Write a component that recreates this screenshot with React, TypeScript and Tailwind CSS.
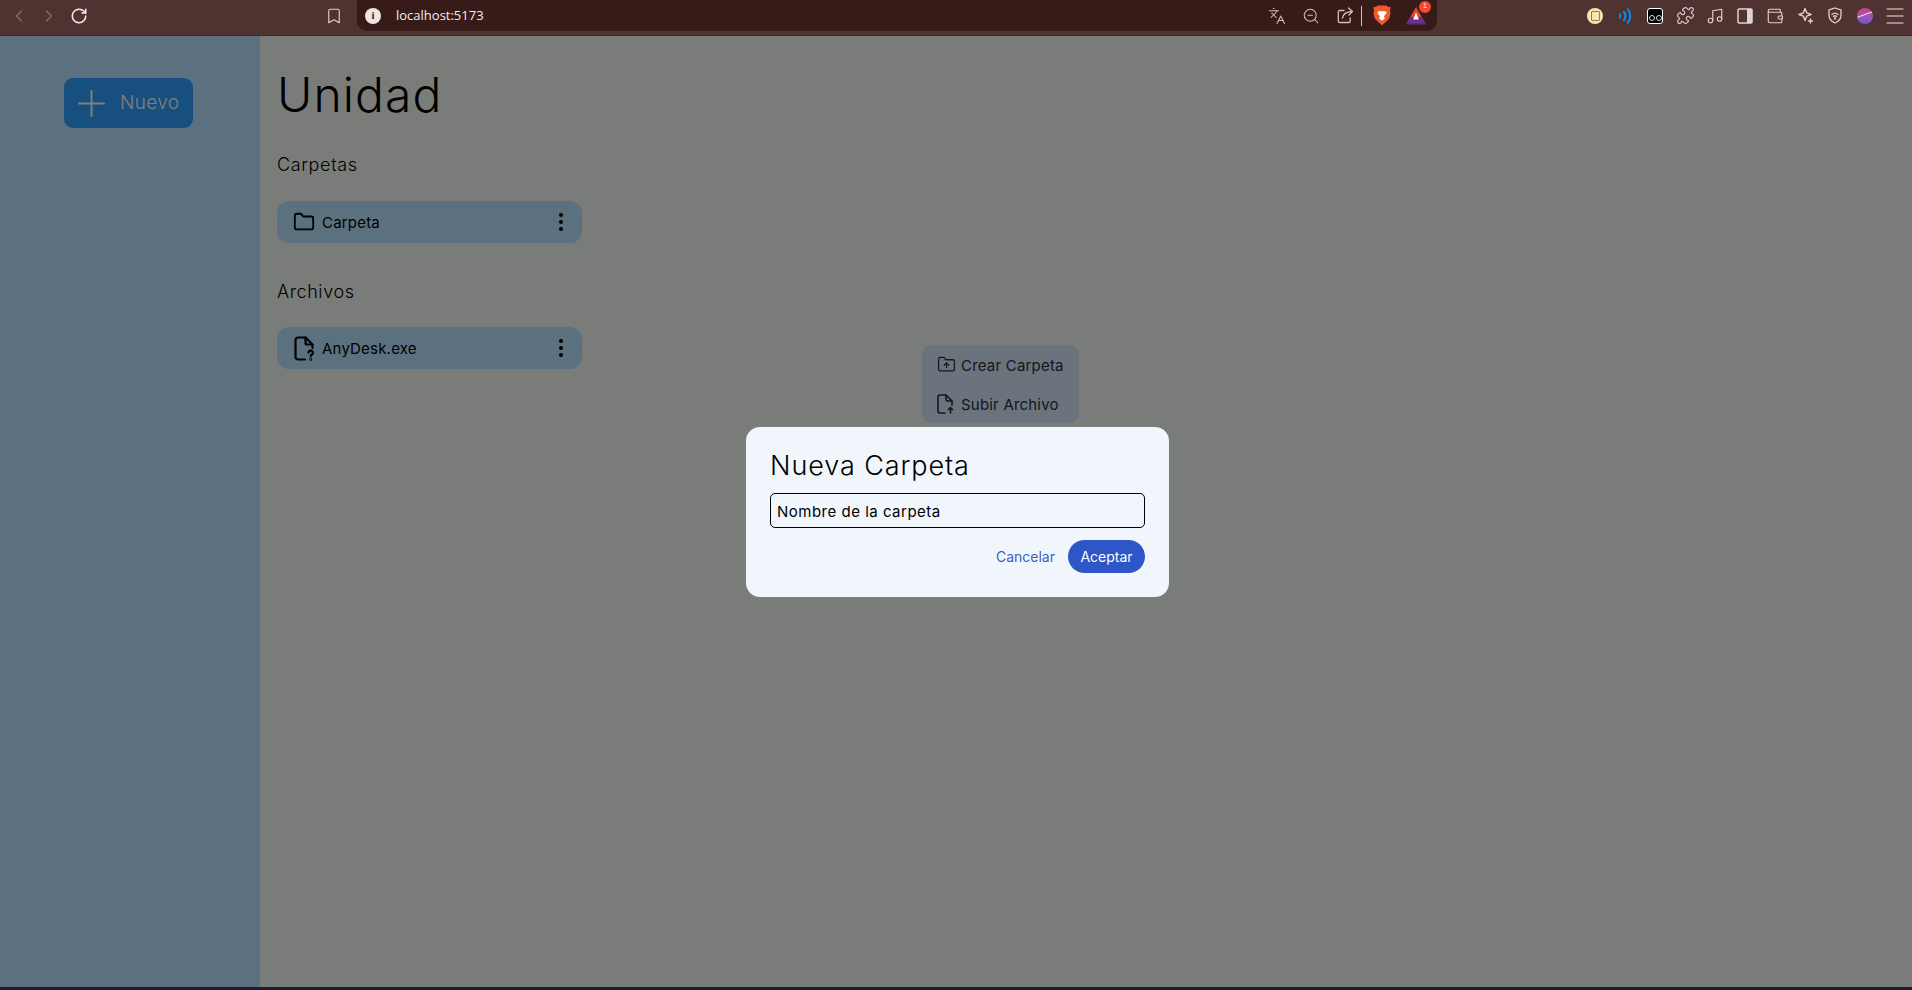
import { useState } from 'react';
import {
  ChevronLeft,
  ChevronRight,
  RotateCw,
  Bookmark,
  Languages,
  ZoomOut,
  Puzzle,
  Music,
  Wallet,
  Plus,
  Folder,
  FolderUp,
  Menu,
} from 'lucide-react';

function BraveLogo() {
  return (
    <svg width="18" height="21" viewBox="0 0 18 21">
      <path d="M4.5 0.5h9l1.5 1.6 2 -.3 .7 1.2 -.8 2.2 .6 3 -1.2 5.2 -3.5 3.6 -3.8 3.2 -3.8 -3.2 -3.500 -3.6 -1.2 -5.2 .6 -3 -.8 -2.2 .7 -1.2 2 .3z" fill="#f0592b" />
      <path d="M5 6.5l2.6 -.6 1.4 .6 1.4 -.6 2.6 .6 .6 1.4 -2.6 3.4 .8 2.2 -2.8 2.2 -2.8 -2.2 .8 -2.2 -2.6 -3.4z" fill="#fff" />
    </svg>
  );
}

function RewardsLogo() {
  return (
    <svg width="20" height="18" viewBox="0 0 20 18">
      <path d="M10 0l9.500 16.500H.5z" fill="#e2482d" />
      <path d="M.5 16.500L5 9l5 4 5-4 4.500 7.500z" fill="#6b2f8f" />
      <path d="M10 5.500l2.800 7H7.200z" fill="#fff" />
      <rect x="0.5" y="16" width="19" height="1.6" fill="#5a2a86" />
    </svg>
  );
}

function ShareIcon() {
  return (
    <svg width="17" height="17" viewBox="0 0 17 17" fill="none" stroke="#cdbfbb" strokeWidth="1.3" strokeLinecap="round" strokeLinejoin="round">
      <path d="M7 3.500H2.500a1.200 1.200 0 0 0-1.200 1.200v9.600a1.200 1.200 0 0 0 1.200 1.200h9.500a1.200 1.200 0 0 0 1.200-1.200V11" />
      <path d="M5.500 11c.5-4 3-6 9.500-6.500" />
      <path d="M11.500 1l4 3.500-3.500 3.500" />
    </svg>
  );
}

function SidebarToggle() {
  return (
    <svg width="16" height="16" viewBox="0 0 16 16">
      <rect x="1" y="1" width="14" height="14" rx="1" fill="none" stroke="#ddd3d0" strokeWidth="1.5" />
      <rect x="10" y="1" width="5" height="14" fill="#ddd3d0" />
    </svg>
  );
}

function ExtensionIcons() {
  return (
    <div className="flex items-center pr-[2px]">
      <div className="w-[30px] flex justify-center">
        <div className="w-4 h-4 rounded-full bg-[#f4e7ae] flex items-center justify-center">
          <div className="w-[9px] h-[10px] border border-[#8b7f55] rounded-[1px]" />
        </div>
      </div>
      <div className="w-[30px] flex justify-center">
        <svg width="14" height="16" viewBox="0 0 14 16" fill="none" stroke="#0a8af0" strokeLinecap="round" strokeWidth="2.200">
          <path d="M2 6.500a3 3 0 0 1 0 3" />
          <path d="M6 4a7 7 0 0 1 0 8" />
          <path d="M10 1.500a11 11 0 0 1 0 13" />
        </svg>
      </div>
      <div className="w-[30px] flex justify-center">
        <div className="w-4 h-4 rounded-[3px] bg-black border border-white flex items-end justify-center gap-px pb-[2px]">
          <div className="w-[6px] h-[6px] rounded-full border border-[#ddd]" />
          <div className="w-[6px] h-[6px] rounded-full border border-[#ddd]" />
        </div>
      </div>
      <div className="w-[30px] flex justify-center">
        <Puzzle size={19} color="#ddd3d0" strokeWidth={1.4} />
      </div>
      <div className="w-[30px] flex justify-center">
        <Music size={18} color="#ddd3d0" strokeWidth={1.5} />
      </div>
      <div className="w-[30px] flex justify-center">
        <SidebarToggle />
      </div>
      <div className="w-[30px] flex justify-center">
        <Wallet size={18} color="#ddd3d0" strokeWidth={1.5} />
      </div>
      <div className="w-[30px] flex justify-center">
        <svg width="17" height="17" viewBox="0 0 17 17" fill="none" stroke="#ddd3d0" strokeWidth="1.4" strokeLinejoin="round">
          <path d="M8 1.500l1.700 4.300 4.300 1.700 -4.300 1.700 -1.700 4.300 -1.700 -4.300 -4.300 -1.700 4.300 -1.700z" />
          <path d="M13.500 12v4M11.500 14h4" strokeLinecap="round" />
        </svg>
      </div>
      <div className="w-[30px] flex justify-center">
        <svg width="16" height="17" viewBox="0 0 16 17" fill="none" stroke="#ddd3d0" strokeWidth="1.300" strokeLinecap="round">
          <path d="M8 1l6 2v5c0 4-2.600 6.600-6 8-3.400-1.400-6-4-6-8V3z" />
          <path d="M5 7.500a4.400 4.400 0 0 1 6 0M6.500 9.500a2.200 2.200 0 0 1 3 0" />
          <circle cx="8" cy="11.500" r=".5" />
        </svg>
      </div>
      <div className="w-[30px] flex justify-center">
        <div className="w-4 h-4 rounded-full bg-gradient-to-b from-[#d63a86] to-[#6f55d8] relative overflow-hidden">
          <div className="absolute left-0 top-[6px] w-4 h-px bg-white/80 -rotate-[20deg]" />
        </div>
      </div>
      <div className="w-[30px] flex justify-center">
        <Menu size={24} color="#eee6e3" strokeWidth={1.1} />
      </div>
    </div>
  );
}

function BrowserBar() {
  return (
    <div className="h-[36px] shrink-0 bg-[#4f3331] border-b border-[#3e2927] flex items-start">
      <div className="flex items-center h-[31px] pl-[9px]">
        <div className="w-5 flex justify-center">
          <ChevronLeft size={22} color="#86716e" strokeWidth={1.4} />
        </div>
        <div className="w-5 ml-[10px] flex justify-center">
          <ChevronRight size={22} color="#86716e" strokeWidth={1.4} />
        </div>
        <div className="w-5 ml-[10px] flex justify-center">
          <RotateCw size={18} color="#f3eeee" strokeWidth={2} />
        </div>
        <div className="w-5 ml-[235px] flex justify-center">
          <Bookmark size={18} color="#ddd3d0" strokeWidth={1.5} />
        </div>
      </div>
      <div className="ml-[13px] w-[1080px] h-[31px] bg-[#371b19] rounded-b-[10px] flex items-center pl-[9px] pr-[11px]">
        <div className="w-4 h-4 ml-[-1px] rounded-full bg-[#f2e4e2] flex items-center justify-center font-['Liberation_Serif',serif] font-bold text-[11px] text-[#371b19]">
          i
        </div>
        <span className="ml-[15px] text-[13px] text-[#f4ecea] font-['Open_Sans',sans-serif]">localhost:5173</span>
        <div className="ml-auto flex items-center">
          <Languages size={18} color="#cdbfbb" strokeWidth={1.4} />
          <ZoomOut size={18} color="#cdbfbb" strokeWidth={1.4} className="ml-[16px]" />
          <div className="ml-[17px]">
            <ShareIcon />
          </div>
          <div className="w-px h-[20px] bg-[#cdbfbb] ml-[7px]" />
          <div className="ml-[11px]">
            <BraveLogo />
          </div>
          <div className="ml-[15px] relative">
            <RewardsLogo />
            <div className="absolute -top-[6px] -right-[5px] w-[12px] h-[12px] rounded-full bg-[#f2492f] text-white text-[7px] flex items-center justify-center font-['Liberation_Sans',sans-serif]">
              1
            </div>
          </div>
        </div>
      </div>
      <div className="flex-1" />
      <div className="h-[31px] flex items-center">
        <ExtensionIcons />
      </div>
    </div>
  );
}

function DotsIcon() {
  return (
    <svg width="6" height="20" viewBox="0 0 6 20" fill="#000">
      <circle cx="3" cy="3" r="2" />
      <circle cx="3" cy="10" r="2" />
      <circle cx="3" cy="17" r="2" />
    </svg>
  );
}

function UnknownFileIcon() {
  return (
    <svg width="21" height="25" viewBox="0 0 21 25" fill="none" stroke="#000" strokeWidth="2.200" strokeLinejoin="round" strokeLinecap="round">
      <path d="M11 23.500H4a2.500 2.500 0 0 1-2.500-2.500V4A2.500 2.500 0 0 1 4 1.500h7.500l7 7V12" />
      <path d="M11.500 1.500v5.500a1.500 1.500 0 0 0 1.500 1.500h5.500" />
      <path d="M14.500 16.500a2.200 2.200 0 1 1 3.200 2.200c-.7.4-1 .8-1 1.600" />
      <circle cx="16.700" cy="23.300" r=".4" />
    </svg>
  );
}

function UploadFileIcon() {
  return (
    <svg width="18" height="20" viewBox="0 0 18 20" fill="none" stroke="#2a2f3a" strokeWidth="1.600" strokeLinejoin="round" strokeLinecap="round">
      <path d="M8 19H3a2 2 0 0 1-2-2V3a2 2 0 0 1 2-2h6l6 6v4" />
      <path d="M9 1v4.500A1.500 1.500 0 0 0 10.500 7H15" />
      <path d="M13.500 19v-5M11.500 15.500l2-2 2 2" />
    </svg>
  );
}

function DriveRow({ name, icon }: { name: string; icon: React.ReactNode }) {
  return (
    <div className="w-[305px] h-[42px] rounded-[12px] bg-[#b8e2ff] flex items-center pl-[16px] pr-[18px]">
      <div className="w-[22px] flex justify-center">{icon}</div>
      <span className="ml-[7px] pt-[3px] text-[15px] tracking-[0.2px] text-black">{name}</span>
      <div className="ml-auto">
        <DotsIcon />
      </div>
    </div>
  );
}

export default function App() {
  const [folderName] = useState('Nombre de la carpeta');

  return (
    <div className="w-full h-[990px] flex flex-col overflow-hidden bg-[#1f1d2b] font-['Inter',sans-serif]">
      <BrowserBar />
      <div className="relative h-[951px] shrink-0 flex">
        <aside className="w-[260px] shrink-0 bg-[#b8e2ff] pt-[42px] pl-[64px]">
          <button className="w-[129px] h-[50px] rounded-[9px] bg-[#2e9eff] flex items-center pl-[6px] text-white">
            <Plus size={43} strokeWidth={1.1} />
            <span className="ml-[7px] pt-[1px] text-[19px] font-light tracking-[0.3px]">Nuevo</span>
          </button>
        </aside>
        <main className="relative flex-1 bg-[#f5f8f5] pl-[17px] pt-[30px]">
          <h1 className="text-[48px] leading-[58px] font-light tracking-[1.1px] text-black">Unidad</h1>
          <h2 className="mt-[29px] text-[18px] leading-[24px] tracking-[0.65px] font-light text-black">Carpetas</h2>
          <div className="mt-[24px]">
            <DriveRow name="Carpeta" icon={<Folder size={24} color="#000" strokeWidth={2} />} />
          </div>
          <h2 className="mt-[36px] pt-[1px] text-[18px] leading-[24px] tracking-[0.6px] font-light text-black">Archivos</h2>
          <div className="mt-[23px]">
            <DriveRow name="AnyDesk.exe" icon={<UnknownFileIcon />} />
          </div>
          {/* menu del boton Nuevo, queda detras del modal */}
          <div className="absolute left-[662px] top-[309px] w-[157px] h-[78px] rounded-[9px] bg-[#d6e6fa] flex flex-col justify-center gap-[19px] pl-[15px] text-[#2a2f3a] text-[15px] tracking-[0.2px]">
            <div className="flex items-center h-[20px]">
              <FolderUp size={19} strokeWidth={1.6} />
              <span className="ml-[5px] pt-[3px]">Crear Carpeta</span>
            </div>
            <div className="flex items-center h-[20px]">
              <UploadFileIcon />
              <span className="ml-[6px] pt-[3px]">Subir Archivo</span>
            </div>
          </div>
        </main>
        <div className="absolute inset-0 bg-black/50 flex items-center justify-center">
          <div className="w-[423px] h-[170px] ml-[3px] rounded-[14px] bg-[#f1f6fd] px-[24px] pt-[22px]">
            <h3 className="text-[27px] leading-[34px] font-light tracking-[0.9px] text-black">Nueva Carpeta</h3>
            <input
              readOnly
              value={folderName}
              className="mt-[10px] w-[375px] h-[35px] rounded-[5px] border border-black bg-transparent px-[6px] pt-[3px] text-[15px] tracking-[0.5px] text-black outline-none"
            />
            <div className="mt-[12px] flex items-center justify-end">
              <button className="text-[14px] text-[#3d5fc4]">Cancelar</button>
              <button className="ml-[13px] w-[77px] h-[33px] rounded-full bg-[#2e56c8] text-white text-[14px]">Aceptar</button>
            </div>
          </div>
        </div>
      </div>
      <div className="h-[3px] shrink-0 bg-[#1f1d2b]" />
    </div>
  );
}
